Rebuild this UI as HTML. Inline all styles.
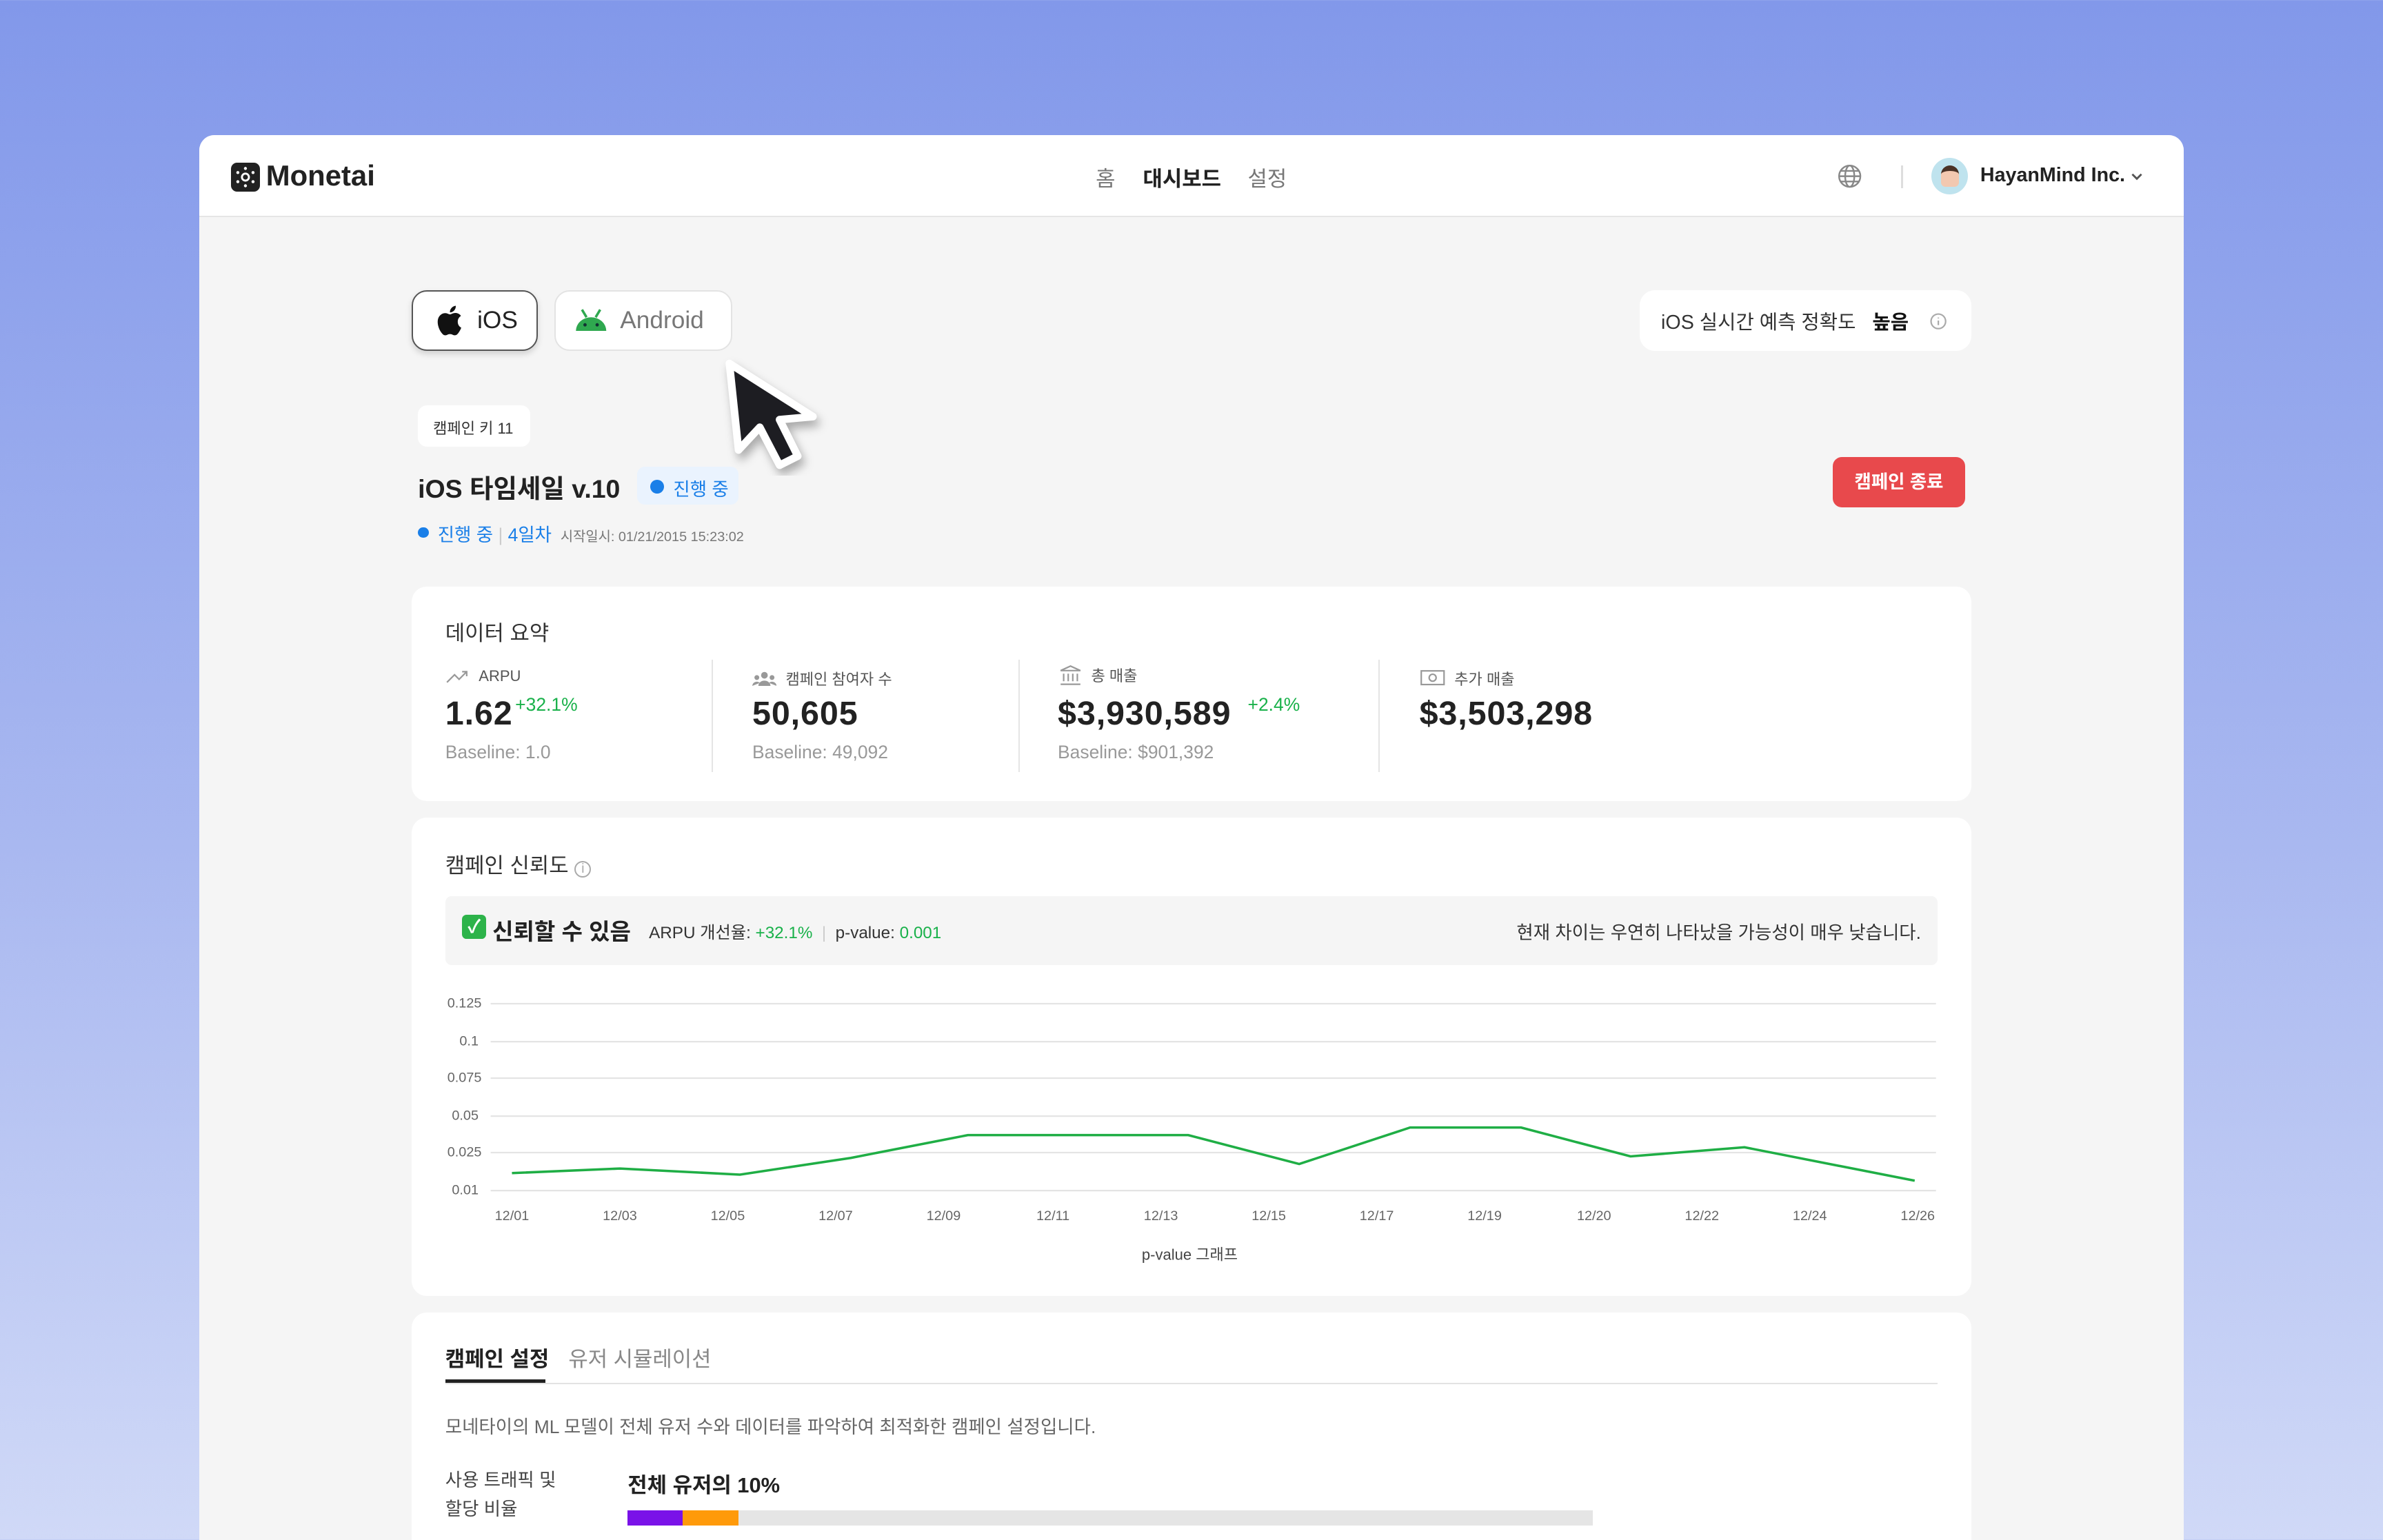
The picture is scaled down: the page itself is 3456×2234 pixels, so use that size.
<!DOCTYPE html>
<html><head><meta charset="utf-8"><style>
*{box-sizing:border-box;margin:0;padding:0}
html,body{width:3456px;height:2234px;overflow:hidden}
body{background:linear-gradient(180deg,#8298ea 0%,#a9b8f0 55%,#d0d9f7 100%);font-family:"Liberation Sans","Noto Sans CJK KR",sans-serif;color:#222}
#w{zoom:2.20408;width:1568px;height:1014px;position:relative}
.card{position:absolute;left:131px;top:89px;width:1306px;height:940px;background:#f5f5f5;border-radius:10px 10px 0 0;overflow:hidden}
.hdr{height:54px;background:#fff;border-bottom:1px solid #e5e5e5;position:relative}
.abs{position:absolute}
.box{position:absolute;background:#fff;border-radius:10px}
.g{color:#19b14a}.b{color:#1a7fe8}.mut{color:#888}
.lbl{font-size:10px;color:#555;display:flex;align-items:center;gap:6px}
.big{font-size:22px;font-weight:bold;color:#222;letter-spacing:.4px}
.base{font-size:12px;color:#999}
.sep{position:absolute;top:48px;width:1px;height:74px;background:#e5e5e5}
</style></head><body><div id="w">
<div class="card">
 <div class="hdr">
  <div class="abs" style="left:21px;top:18px;width:19px;height:19px;background:#222;border-radius:4px"><svg width="19" height="19" viewBox="0 0 19 19"><circle cx="9.5" cy="9.5" r="2.3" fill="none" stroke="#fff" stroke-width="1.3"/><g fill="#fff"><circle cx="9.5" cy="3.8" r="1"/><circle cx="9.5" cy="15.2" r="1"/><circle cx="4.5" cy="6.5" r="1"/><circle cx="14.5" cy="6.5" r="1"/><circle cx="4.5" cy="12.5" r="1"/><circle cx="14.5" cy="12.5" r="1"/></g></svg></div>
  <div class="abs" style="left:44px;top:16px;font-size:19px;font-weight:bold">Monetai</div>
  <div class="abs" style="left:590px;top:17px;font-size:14px;color:#777">홈</div>
  <div class="abs" style="left:621px;top:17px;font-size:14px;font-weight:bold">대시보드</div>
  <div class="abs" style="left:690px;top:17px;font-size:14px;color:#777">설정</div>
  <svg class="abs" style="left:1078px;top:19px" width="16" height="16" viewBox="0 0 16 16" fill="none" stroke="#888" stroke-width="1.1"><circle cx="8" cy="8" r="7"/><ellipse cx="8" cy="8" rx="3" ry="7"/><path d="M1 8h14M2 4.5h12M2 11.5h12"/></svg>
  <div class="abs" style="left:1120px;top:20px;width:1px;height:15px;background:#ddd"></div>
  <div class="abs" style="left:1140px;top:15px;width:24px;height:24px;border-radius:50%;background:#bfe3ee;overflow:hidden"><div style="margin:5px 0 0 6px;width:12px;height:14px;border-radius:6px 6px 3px 3px;background:#f2c8b0;border-top:4px solid #4a3226"></div></div>
  <div class="abs" style="left:1172px;top:19px;font-size:13px;font-weight:bold">HayanMind Inc.</div>
  <svg class="abs" style="left:1270px;top:22px" width="10" height="10" viewBox="0 0 10 10"><path d="M2 3.5l3 3 3-3" stroke="#555" fill="none" stroke-width="1.3"/></svg>
 </div>

 <div class="box" style="left:140px;top:102px;width:83px;height:40px;border:1px solid #555;box-shadow:0 2px 4px rgba(0,0,0,.15)"></div>
 <svg class="abs" style="left:156px;top:112px" width="17" height="20" viewBox="0 0 17 20"><path d="M14 10.6c0-2.4 2-3.600 2.1-3.700-1.1-1.7-2.9-1.900-3.5-1.900-1.5-.2-2.9.9-3.7.9s-1.9-.9-3.2-.8C4 5.1 2.5 6.1 1.6 7.6c-1.7 3-.4 7.3 1.2 9.7.8 1.2 1.8 2.5 3 2.4 1.2 0 1.7-.8 3.1-.8s1.9.8 3.2.8c1.3 0 2.1-1.2 2.9-2.4.9-1.3 1.3-2.6 1.3-2.7-.1 0-2.3-.9-2.3-4zM11.7 3.3c.7-.8 1.1-1.9 1-3-.9 0-2.1.6-2.8 1.4-.6.7-1.2 1.8-1 2.9 1.1.1 2.1-.5 2.8-1.3z" fill="#111"/></svg>
 <div class="abs" style="left:183px;top:113px;font-size:16px">iOS</div>
 <div class="box" style="left:234px;top:102px;width:117px;height:40px;border:1px solid #e3e3e3"></div>
 <svg class="abs" style="left:247px;top:114px" width="22" height="16" viewBox="0 0 22 16"><path d="M1 15a10 9 0 0 1 20 0z" fill="#2fa84f"/><path d="M5 1l3 5M17 1l-3 5" stroke="#2fa84f" stroke-width="1.6"/><circle cx="7" cy="11" r="1.1" fill="#133"/><circle cx="15" cy="11" r="1.1" fill="#133"/></svg>
 <div class="abs" style="left:277px;top:113px;font-size:16px;color:#777">Android</div>
 <svg class="abs" style="left:340px;top:144px" width="75" height="80" viewBox="0 0 75 80"><path d="M9 6l6 57 14-15 13 25 12-6-12-24 22-2z" fill="#1d1d22" stroke="#fff" stroke-width="5" stroke-linejoin="round" style="filter:drop-shadow(2px 4px 3px rgba(0,0,0,.3))"/></svg>

 <div class="box" style="left:948px;top:102px;width:218px;height:40px"></div>
 <div class="abs" style="left:962px;top:113px;font-size:13px;color:#333">iOS 실시간 예측 정확도 &nbsp;&nbsp;<b style="color:#111">높음</b></div>
 <svg class="abs" style="left:1139px;top:117px" width="11" height="11" viewBox="0 0 11 11"><circle cx="5.5" cy="5.5" r="4.8" fill="none" stroke="#aaa"/><path d="M5.5 5v3M5.5 3v.6" stroke="#aaa"/></svg>

 <div class="box" style="left:144px;top:178px;width:74px;height:27px;border-radius:6px"></div>
 <div class="abs" style="left:154px;top:185px;font-size:10px;color:#333">캠페인 키 11</div>
 <div class="abs" style="left:144px;top:219px;font-size:17px;font-weight:bold">iOS 타임세일 v.10</div>
 <div class="abs" style="left:288px;top:218px;width:67px;height:25px;background:#eaf3fe;border-radius:5px"></div>
 <div class="abs" style="left:297px;top:227px;width:9px;height:9px;border-radius:50%;background:#1a7fe8"></div>
 <div class="abs b" style="left:312px;top:223px;font-size:12px">진행 중</div>
 <div class="abs" style="left:144px;top:258px;width:7px;height:7px;border-radius:50%;background:#1a7fe8"></div>
 <div class="abs b" style="left:157px;top:253px;font-size:12px">진행 중 <span style="color:#ccc">|</span> 4일차 <span style="font-size:9px;color:#777">&nbsp;시작일시: 01/21/2015 15:23:02</span></div>
 <div class="abs" style="left:1075px;top:212px;width:87px;height:33px;background:#e8494c;border-radius:6px;color:#fff;font-size:12px;font-weight:bold;text-align:center;line-height:33px">캠페인 종료</div>

 <div class="box" style="left:140px;top:297px;width:1026px;height:141px">
  <div class="abs" style="left:22px;top:19px;font-size:14px;color:#333">데이터 요약</div>
  <div class="abs lbl" style="left:22px;top:53px"><svg width="16" height="10" viewBox="0 0 16 10"><path d="M1 9l5-5 3 3 5-5M11 2h3v3" stroke="#999" fill="none"/></svg>ARPU</div>
  <div class="abs big" style="left:22px;top:71px">1.62</div><div class="abs g" style="left:68px;top:71px;font-size:12px">+32.1%</div>
  <div class="abs base" style="left:22px;top:102px">Baseline: 1.0</div>
  <div class="sep" style="left:197px"></div>
  <div class="abs lbl" style="left:224px;top:53px"><svg width="16" height="10" viewBox="0 0 16 10" fill="#999"><circle cx="8" cy="3" r="2.2"/><circle cx="3" cy="4.5" r="1.6"/><circle cx="13" cy="4.5" r="1.6"/><path d="M4 10a4 3.5 0 0 1 8 0zM0 10a3 3 0 0 1 5-2zM16 10a3 3 0 0 0-5-2z"/></svg>캠페인 참여자 수</div>
  <div class="abs big" style="left:224px;top:71px">50,605</div>
  <div class="abs base" style="left:224px;top:102px">Baseline: 49,092</div>
  <div class="sep" style="left:399px"></div>
  <div class="abs lbl" style="left:426px;top:51px"><svg width="15" height="14" viewBox="0 0 15 14"><path d="M1 4l6.5-3 6.5 3zM3 6v5M6 6v5M9 6v5M12 6v5M1 13h13" stroke="#999" fill="none"/></svg>총 매출</div>
  <div class="abs big" style="left:425px;top:71px">$3,930,589</div><div class="abs g" style="left:550px;top:71px;font-size:12px">+2.4%</div>
  <div class="abs base" style="left:425px;top:102px">Baseline: $901,392</div>
  <div class="sep" style="left:636px"></div>
  <div class="abs lbl" style="left:663px;top:53px"><svg width="17" height="11" viewBox="0 0 17 11"><rect x="1" y="1" width="15" height="9" stroke="#999" fill="none"/><circle cx="8.5" cy="5.5" r="2.3" stroke="#999" fill="none"/></svg>추가 매출</div>
  <div class="abs big" style="left:663px;top:71px">$3,503,298</div>
 </div>

 <div class="box" style="left:140px;top:449px;width:1026px;height:315px">
  <div class="abs" style="left:22px;top:20px;font-size:14px;color:#333">캠페인 신뢰도 <span style="font-size:9px;color:#aaa;border:1px solid #aaa;border-radius:50%;display:inline-block;width:11px;height:11px;line-height:9px;text-align:center">i</span></div>
  <div class="abs" style="left:22px;top:52px;width:982px;height:45px;background:#f5f5f5;border-radius:4px"></div>
  <div class="abs" style="left:33px;top:64px;width:16px;height:16px;background:#2db34a;border-radius:3px;color:#fff;font-size:12px;text-align:center;line-height:16px;font-weight:bold">✓</div>
  <div class="abs" style="left:53px;top:63px;font-size:15px;font-weight:bold">신뢰할 수 있음</div>
  <div class="abs" style="left:156px;top:67px;font-size:11px;color:#333">ARPU 개선율: <span class="g">+32.1%</span> &nbsp;<span style="color:#ccc">|</span>&nbsp; p-value: <span class="g">0.001</span></div>
  <div class="abs" style="right:33px;top:66px;font-size:12px;color:#333">현재 차이는 우연히 나타났을 가능성이 매우 낮습니다.</div>
  <svg class="abs" style="left:0;top:0" width="1026" height="315" viewBox="271 538 1026 315">
   <g stroke="#e4e4e4"><path d="M323 660.5h951M323 685.5h951M323 709.5h951M323 734.5h951M323 758.5h951M323 783.5h951"/></g>
   <g font-size="9" fill="#666" text-anchor="end" font-family="Liberation Sans"><text x="317" y="663">0.125</text><text x="315" y="688">0.1</text><text x="317" y="712">0.075</text><text x="315" y="737">0.05</text><text x="317" y="761">0.025</text><text x="315" y="786">0.01</text></g>
   <g font-size="9" fill="#666" text-anchor="middle" font-family="Liberation Sans"><text x="337" y="803">12/01</text><text x="408" y="803">12/03</text><text x="479" y="803">12/05</text><text x="550" y="803">12/07</text><text x="621" y="803">12/09</text><text x="693" y="803">12/11</text><text x="764" y="803">12/13</text><text x="835" y="803">12/15</text><text x="906" y="803">12/17</text><text x="977" y="803">12/19</text><text x="1049" y="803">12/20</text><text x="1120" y="803">12/22</text><text x="1191" y="803">12/24</text><text x="1262" y="803">12/26</text></g>
   <polyline points="337,772 408,769 487,773 560,762 637,747 700,747 782,747 855,766 928,742 1001,742 1073,761 1148,755 1260,777" fill="none" stroke="#1fae45" stroke-width="1.6"/>
   <text x="783" y="829" font-size="10" fill="#444" text-anchor="middle" font-family="Liberation Sans, Noto Sans CJK KR">p-value 그래프</text>
  </svg>
 </div>

 <div class="box" style="left:140px;top:775px;width:1026px;height:200px">
  <div class="abs" style="left:22px;top:19px;font-size:14px;font-weight:bold">캠페인 설정</div>
  <div class="abs" style="left:22px;top:44px;width:66px;height:2px;background:#222"></div>
  <div class="abs" style="left:103px;top:19px;font-size:14px;color:#888">유저 시뮬레이션</div>
  <div class="abs" style="left:22px;top:46px;width:982px;height:1px;background:#e3e3e3"></div>
  <div class="abs" style="left:22px;top:65px;font-size:12px;color:#666">모네타이의 ML 모델이 전체 유저 수와 데이터를 파악하여 최적화한 캠페인 설정입니다.</div>
  <div class="abs" style="left:22px;top:101px;font-size:12px;color:#444;line-height:19px">사용 트래픽 및<br>할당 비율</div>
  <div class="abs" style="left:142px;top:102px;font-size:14px;font-weight:bold">전체 유저의 10%</div>
  <div class="abs" style="left:142px;top:130px;width:635px;height:10px;background:#e5e5e5"></div>
  <div class="abs" style="left:142px;top:130px;width:36px;height:10px;background:#7a12e8"></div>
  <div class="abs" style="left:178px;top:130px;width:37px;height:10px;background:#ff9a0a"></div>
 </div>
</div>
</div></body></html>
